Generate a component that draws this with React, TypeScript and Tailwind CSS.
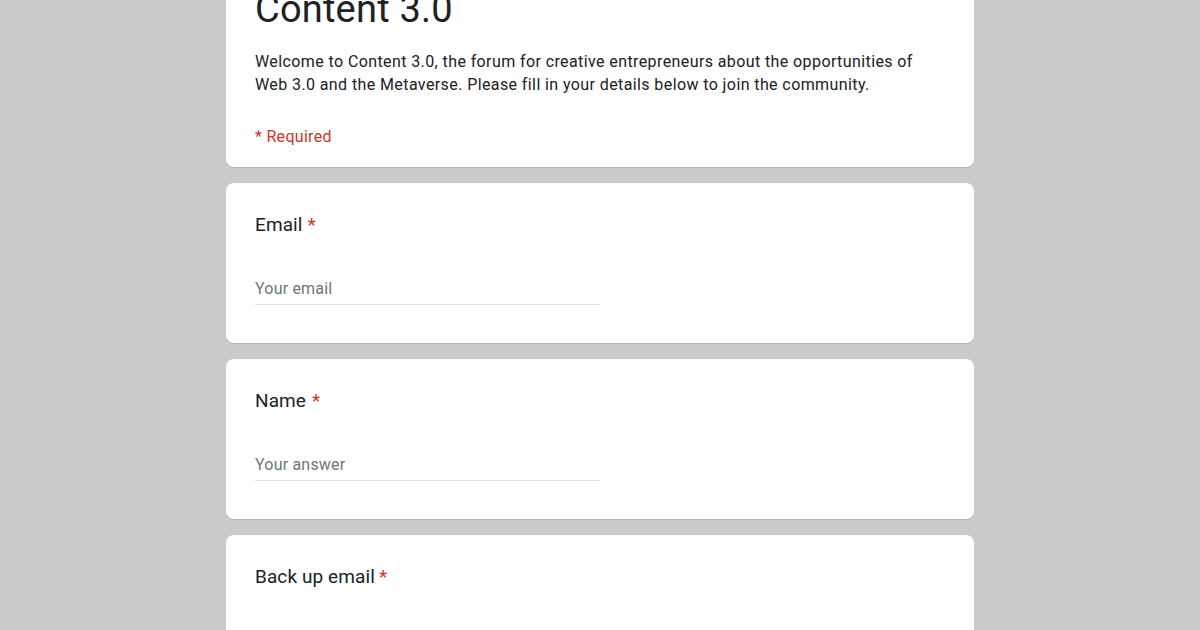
import React from "react";

const font = { fontFamily: "Roboto, 'Noto Sans', Arial, sans-serif" };

function Question({ label, placeholder, gap }: { label: string; placeholder?: string; gap?: number }) {
  return (
    <div className="bg-white rounded-lg shadow-[0_1px_1px_rgba(0,0,0,0.12)] px-[29px] pt-[30px] pb-[38px]">
      <div className="text-[19px] leading-[24px] text-[#202124] tracking-[0.1px]">
        {label}
        <span className="text-[#d93025]" style={{ marginLeft: gap ?? 4 }}>*</span>
      </div>
      {placeholder && (
        <div className="mt-[40px] w-[345px] border-b border-[#e0e0e0] pb-[3px] text-[16px] leading-[24px] text-[#70757a] tracking-[0.2px]">
          {placeholder}
        </div>
      )}
    </div>
  );
}

export default function App() {
  return (
    <div className="w-[1200px] h-[630px] overflow-hidden bg-[#cccaca]" style={font}>
      <div className="w-[748px] mx-auto -mt-[40px] flex flex-col gap-[16px]">
        {/* header card */}
        <div className="bg-white rounded-lg shadow-[0_1px_1px_rgba(0,0,0,0.12)] px-[29px] pt-[25px] pb-[18px]">
          <h1 className="text-[38px] leading-[48px] text-[#202124] tracking-[0.2px] font-normal">Content 3.0</h1>
          <p className="mt-[17px] text-[16px] leading-[23px] text-[#202124] tracking-[0.4px]">
            Welcome to Content 3.0, the forum for creative entrepreneurs about the opportunities of
            <br />
            Web 3.0 and the Metaverse. Please fill in your details below to join the community.
          </p>
          <div className="mt-[29px] text-[16px] leading-[24px] text-[#d93025] tracking-[0.3px]">* Required</div>
        </div>

        <Question label="Email" placeholder="Your email" gap={5} />
        <Question label="Name" placeholder="Your answer" gap={6} />
        <Question label="Back up email" placeholder="Your email" gap={4} />
      </div>
    </div>
  );
}
